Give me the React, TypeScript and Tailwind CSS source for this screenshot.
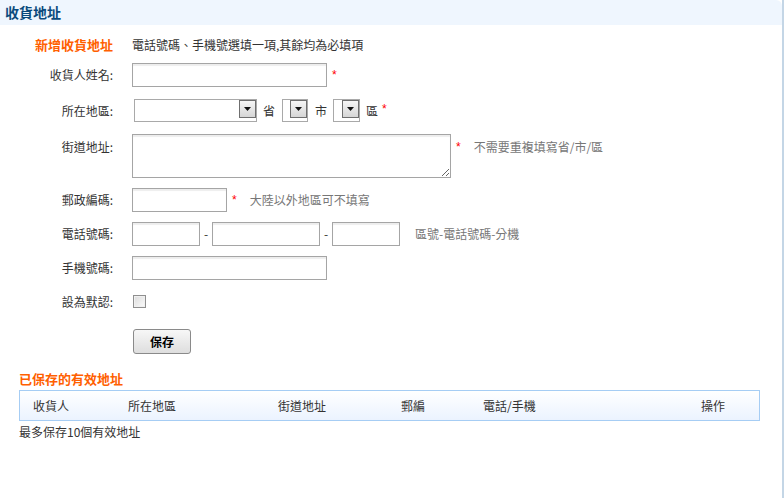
import React from "react";

const FONT = {
  fontFamily: '"Noto Sans CJK TC", "Liberation Sans", sans-serif',
};

function Star({ className = "" }: { className?: string }) {
  return (
    <span
      className={`self-start text-[12px] leading-none text-[#ff0000] ${className}`}
      style={{ fontFamily: '"Liberation Sans", sans-serif' }}
    >
      *
    </span>
  );
}

function Label({ children, top }: { children: React.ReactNode; top?: boolean }) {
  return (
    <div
      className={`w-[113px] shrink-0 text-right text-[12px] leading-[18px] text-[#333] ${
        top ? "self-start pt-[4px]" : ""
      }`}
    >
      {children}
    </div>
  );
}

function TextInput({ className }: { className: string }) {
  return (
    <input
      type="text"
      className={`h-[24px] border border-[#a5a5a5] bg-white px-1 text-[12px] shadow-[inset_0_2px_1px_rgba(0,0,0,0.07)] outline-none ${className}`}
    />
  );
}

function Arrow() {
  return (
    <span className="flex h-[18px] w-[17px] items-center justify-center border border-[#6f6f6f] bg-gradient-to-b from-[#f6f6f6] to-[#d6d6d6]">
      <svg width="7" height="4" viewBox="0 0 7 4">
        <path d="M0 0h7L3.5 4z" fill="#111" />
      </svg>
    </span>
  );
}

function Select({ className }: { className: string }) {
  return (
    <div className={`flex h-[23px] items-start justify-end border border-[#a9a9a9] bg-white ${className}`}>
      <Arrow />
    </div>
  );
}

export default function App() {
  return (
    <div
      className="relative h-[498px] w-[784px] overflow-hidden border-r-2 border-[#c4d6e6] bg-white"
      style={FONT}
    >
      <div className="flex h-[25px] items-center rounded-tr-[6px] bg-[#eff6fe] pl-[5px] text-[14px] font-bold text-[#0b4a7c]">
        收貨地址
      </div>

      <div className="flex flex-col">
        <div className="mt-[11px] flex h-[18px] items-center">
          <div className="w-[113px] shrink-0 text-right text-[13px] font-bold text-[#ff6000]">
            新增收貨地址
          </div>
          <span className="ml-[19px] text-[12px] text-[#333]">
            電話號碼、手機號選填一項,其餘均為必填項
          </span>
        </div>

        <div className="mt-[9px] flex h-[24px] items-center">
          <Label>收貨人姓名:</Label>
          <TextInput className="ml-[19px] w-[195px]" />
          <Star className="ml-[5px] mt-[6px]" />
        </div>

        <div className="mt-[12px] flex h-[23px] items-center text-[12px] text-[#333]">
          <Label>所在地區:</Label>
          <Select className="ml-[21px] w-[123px]" />
          <span className="ml-[6px]">省</span>
          <Select className="ml-[7px] w-[26px]" />
          <span className="ml-[7px]">市</span>
          <Select className="ml-[6px] w-[27px]" />
          <span className="ml-[6px]">區</span>
          <Star className="ml-[4px] mt-[4px]" />
        </div>

        <div className="mt-[12px] flex items-start">
          <Label top>街道地址:</Label>
          <textarea className="ml-[19px] h-[44px] w-[319px] border border-[#a5a5a5] bg-white shadow-[inset_0_2px_1px_rgba(0,0,0,0.07)] outline-none" />
          <Star className="ml-[5px] mt-[7px]" />
          <span className="ml-[13px] mt-[4px] text-[12px] leading-[18px] text-[#777]">
            不需要重複填寫省/市/區
          </span>
        </div>

        <div className="mt-[10px] flex h-[24px] items-center">
          <Label>郵政編碼:</Label>
          <TextInput className="ml-[19px] w-[95px]" />
          <Star className="ml-[5px] mt-[6px]" />
          <span className="ml-[13px] text-[12px] text-[#777]">大陸以外地區可不填寫</span>
        </div>

        <div className="mt-[10px] flex h-[24px] items-center text-[12px]">
          <Label>電話號碼:</Label>
          <TextInput className="ml-[19px] w-[68px]" />
          <span className="w-[12px] text-center text-[#333]">-</span>
          <TextInput className="w-[108px]" />
          <span className="w-[12px] text-center text-[#333]">-</span>
          <TextInput className="w-[68px]" />
          <span className="ml-[15px] text-[#777]">區號-電話號碼-分機</span>
        </div>

        <div className="mt-[10px] flex h-[24px] items-center">
          <Label>手機號碼:</Label>
          <TextInput className="ml-[19px] w-[195px]" />
        </div>

        <div className="mt-[10px] flex h-[24px] items-center">
          <Label>設為默認:</Label>
          <span className="ml-[20px] mb-[1px] h-[13px] w-[13px] border border-[#8f8f8f] bg-gradient-to-br from-[#dcdcdc] to-[#fbfbfb] shadow-[inset_0_0_0_1px_#f0f0f0]" />
        </div>

        <div className="mt-[15px] flex">
          <div className="w-[113px] shrink-0" />
          <button className="ml-[20px] h-[25px] w-[58px] rounded-[3px] border border-[#8a8a8a] bg-gradient-to-b from-[#f7f7f7] to-[#dedede] text-[12px] font-bold text-black">
            保存
          </button>
        </div>

        <div className="ml-[19px] mt-[16px] h-[18px] text-[13px] font-bold leading-[18px] text-[#ff6000]">
          已保存的有效地址
        </div>

        <div className="ml-[19px] mt-[2px] flex h-[31px] w-[741px] items-center border border-[#a6cdf4] bg-gradient-to-b from-white to-[#ebf3ff] pl-[13px] text-[12px] text-[#333]">
          <span className="w-[95px]">收貨人</span>
          <span className="w-[150px]">所在地區</span>
          <span className="w-[123px]">街道地址</span>
          <span className="w-[82px]">郵編</span>
          <span className="w-[218px]">電話/手機</span>
          <span>操作</span>
        </div>

        <div className="ml-[19px] mt-[2px] text-[12px] leading-[18px] text-[#333]">
          最多保存10個有效地址
        </div>
      </div>
    </div>
  );
}
